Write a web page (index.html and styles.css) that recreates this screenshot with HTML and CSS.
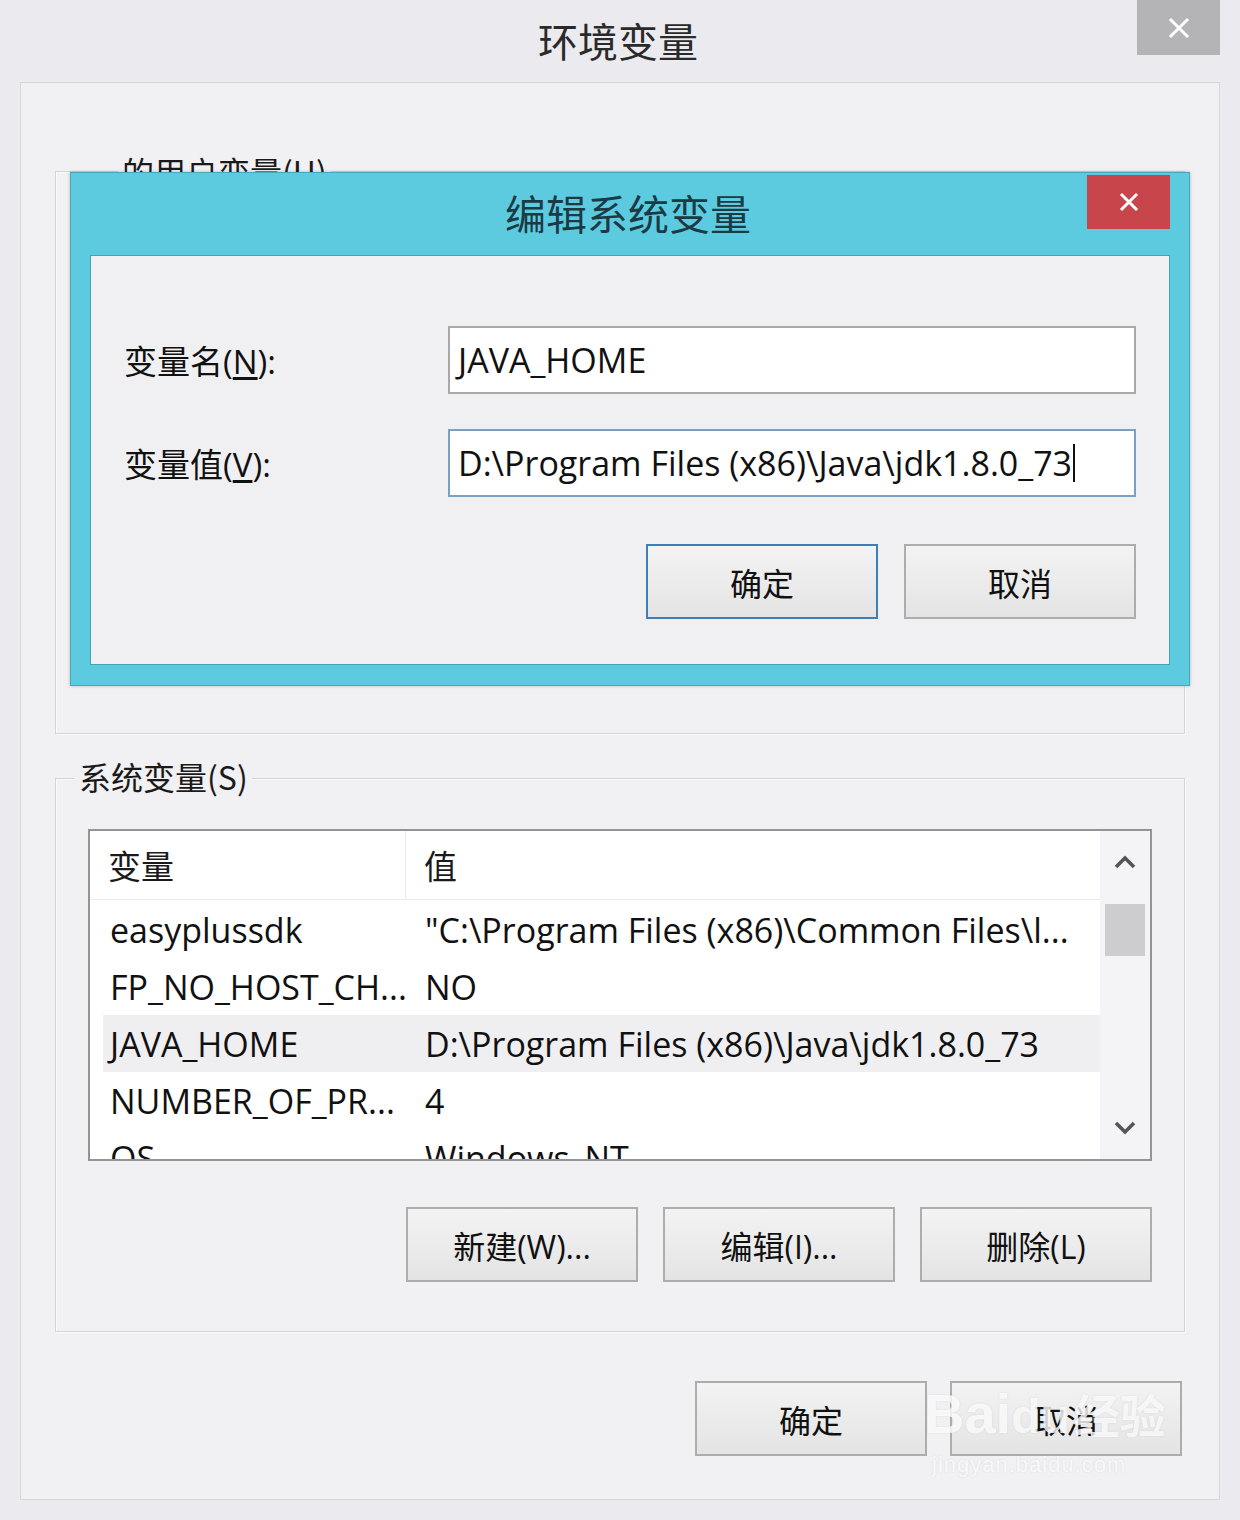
FILE: index.html
```html
<!DOCTYPE html>
<html lang="zh-CN">
<head>
<meta charset="utf-8">
<title>环境变量</title>
<link rel="stylesheet" href="styles.css">
</head>
<body>
<div class="window">
  <header class="titlebar">
    <span class="spacer"></span>
    <h1 class="title">环境变量</h1>
    <button class="close close-gray" aria-label="关闭">
      <svg width="22" height="22" viewBox="0 0 22 22"><path d="M3 3 L19 19 M19 3 L3 19" stroke="#fff" stroke-width="3" stroke-linecap="square"/></svg>
    </button>
  </header>

  <main class="client">
    <div class="group group-user">
      <span class="group-label label-user">的用户变量(U)</span>
    </div>

    <div class="group group-system">
      <span class="group-label label-system">系统变量(S)</span>
      <div class="listview">
        <div class="lv-main">
          <div class="lv-head">
            <div class="hc hc1">变量</div>
            <div class="hc hc2">值</div>
          </div>
          <div class="lv-body">
            <div class="row"><span class="c1">easyplussdk</span><span class="c2">"C:\Program Files (x86)\Common Files\l...</span></div>
            <div class="row"><span class="c1">FP_NO_HOST_CH...</span><span class="c2">NO</span></div>
            <div class="row selected"><span class="c1">JAVA_HOME</span><span class="c2">D:\Program Files (x86)\Java\jdk1.8.0_73</span></div>
            <div class="row"><span class="c1">NUMBER_OF_PR...</span><span class="c2">4</span></div>
            <div class="row"><span class="c1">OS</span><span class="c2">Windows_NT</span></div>
          </div>
        </div>
        <div class="scrollbar">
          <div class="sb-arrow">
            <svg width="24" height="14" viewBox="0 0 24 14"><path d="M3 12 L12 3 L21 12" fill="none" stroke="#555" stroke-width="3.6"/></svg>
          </div>
          <div class="sb-track"><div class="sb-thumb"></div></div>
          <div class="sb-arrow">
            <svg width="24" height="14" viewBox="0 0 24 14"><path d="M3 2 L12 11 L21 2" fill="none" stroke="#555" stroke-width="3.6"/></svg>
          </div>
        </div>
      </div>
      <div class="btn-row">
        <button class="btn">新建(W)...</button>
        <button class="btn">编辑(I)...</button>
        <button class="btn">删除(L)</button>
      </div>
    </div>

    <div class="btn-row footer">
      <button class="btn">确定</button>
      <button class="btn">取消</button>
    </div>
  </main>

  <section class="dialog">
    <header class="dlg-titlebar">
      <h2 class="dlg-title">编辑系统变量</h2>
      <button class="close close-red" aria-label="关闭">
        <svg width="20" height="20" viewBox="0 0 20 20"><path d="M3 3 L17 17 M17 3 L3 17" stroke="#fff" stroke-width="3" stroke-linecap="square"/></svg>
      </button>
    </header>
    <div class="dlg-body">
      <div class="form">
        <label class="lbl">变量名(<u>N</u>):</label>
        <div class="input">JAVA_HOME</div>
        <label class="lbl">变量值(<u>V</u>):</label>
        <div class="input focused">D:\Program Files (x86)\Java\jdk1.8.0_73<span class="caret"></span></div>
      </div>
      <div class="btn-row dlg-buttons">
        <button class="btn default">确定</button>
        <button class="btn">取消</button>
      </div>
    </div>
  </section>

  <div class="watermark">
    <div class="wm-logo"><span>Bai</span><span class="wm-du">du</span><span class="wm-cn">经验</span></div>
    <div class="wm-url">jingyan.baidu.com</div>
  </div>
</div>
</body>
</html>
```

FILE: styles.css
```css
* { box-sizing: border-box; }

body {
  margin: 0;
  background: #ebeaee;
  font-family: "Open Sans", "Noto Sans CJK SC", sans-serif;
  color: #111;
}

.window {
  position: relative;
  width: 1240px;
  height: 1520px;
  background: #ebeaee;
  overflow: hidden;
}

/* ---------- main window title bar ---------- */
.titlebar {
  height: 82px;
  display: grid;
  grid-template-columns: 1fr auto 1fr;
}

.title {
  margin: 0;
  align-self: center;
  font-family: "Noto Sans CJK SC", sans-serif;
  font-weight: 400;
  font-size: 40px;
  line-height: 1;
  color: #2a2a2a;
  padding: 0 4px 2px 0;
}

.close {
  border: 0;
  padding: 0;
  display: flex;
  align-items: center;
  justify-content: center;
}

.close-gray {
  justify-self: end;
  align-self: start;
  margin-right: 20px;
  width: 83px;
  height: 55px;
  background: #b4b4b6;
}

/* ---------- client area ---------- */
.client {
  margin: 0 20px;
  height: 1418px;
  border: 1px solid #d7d7da;
  background: #f1f0f3;
  padding: 0 34px;
  display: flex;
  flex-direction: column;
}

.group {
  border: 1px solid #d4d4d7;
  box-shadow: inset 1px 1px 0 #fbfbfc, 1px 1px 0 #fbfbfc;
}

.group-label {
  display: block;
  width: max-content;
  margin: -21px 0 0 19px;
  padding: 0 4px;
  background: #f1f0f3;
  font-family: "Noto Sans CJK SC", sans-serif;
  font-size: 32px;
  line-height: 40px;
  color: #1a1a1a;
}

.group-user {
  margin-top: 88px;
  height: 563px;
}

.label-user { margin-left: 62px; }

.group-system {
  margin-top: 44px;
  padding: 0 32px 49px;
}

.label-system { margin-left: -13px; margin-top: -23px; }

/* ---------- list view ---------- */
.listview {
  margin-top: 33px;
  height: 332px;
  border: 2px solid #949496;
  background: #fff;
  display: flex;
}

.lv-main {
  flex: 1;
  display: flex;
  flex-direction: column;
  overflow: hidden;
}

.lv-head {
  height: 69px;
  flex: none;
  display: grid;
  grid-template-columns: 316px 1fr;
  border-bottom: 1px solid #ececee;
}

.hc {
  display: flex;
  align-items: center;
  font-family: "Noto Sans CJK SC", sans-serif;
  font-size: 33px;
  color: #1a1a1a;
}

.hc1 { padding-left: 18px; border-right: 1px solid #ececee; }
.hc2 { padding-left: 18px; }

.lv-body {
  flex: 1;
  overflow: hidden;
  padding: 1px 0 0 13px;
}

.row {
  height: 57px;
  display: grid;
  grid-template-columns: 303px 1fr;
  align-items: center;
  font-size: 34px;
  white-space: nowrap;
  color: #111;
}

.row.selected { background: #efeff2; }

.c1 { padding-left: 7px; overflow: hidden; }
.c2 { padding-left: 19px; overflow: hidden; }

.scrollbar {
  width: 50px;
  flex: none;
  background: #f4f4f6;
  display: flex;
  flex-direction: column;
}

.sb-arrow {
  height: 62px;
  display: flex;
  align-items: center;
  justify-content: center;
}

.sb-track {
  flex: 1;
  padding: 11px 5px 0;
}

.sb-thumb {
  height: 52px;
  background: #cdcdcf;
}

/* ---------- buttons ---------- */
.btn-row {
  display: flex;
  justify-content: flex-end;
  gap: 25px;
  margin-top: 46px;
}

.btn {
  width: 232px;
  height: 75px;
  border: 2px solid #adadad;
  background: linear-gradient(#f3f3f3, #e4e4e4);
  font-family: "Open Sans", "Noto Sans CJK SC", sans-serif;
  font-size: 32px;
  color: #111;
  padding: 0;
}

.btn.default { border-color: #3f7fb8; }

.footer {
  margin-top: 49px;
  margin-right: 3px;
  gap: 23px;
}

/* ---------- edit dialog ---------- */
.dialog {
  position: absolute;
  left: 70px;
  top: 172px;
  width: 1120px;
  height: 514px;
  background: #5ccbe0;
  border: 1px solid #48a9bd;
  box-shadow: 0 0 3px rgba(0, 0, 0, 0.25);
  display: flex;
  flex-direction: column;
}

.dlg-titlebar {
  height: 82px;
  flex: none;
  display: flex;
  justify-content: center;
  align-items: center;
  position: relative;
}

.dlg-title {
  margin: 0;
  font-family: "Noto Sans CJK SC", sans-serif;
  font-weight: 400;
  font-size: 41px;
  line-height: 1;
  color: #1b3a44;
  padding: 0 4px 4px 0;
}

.close-red {
  position: absolute;
  top: 2px;
  right: 19px;
  width: 83px;
  height: 54px;
  background: #c8454b;
}

.dlg-body {
  margin: 0 19px;
  height: 410px;
  background: #f0f0f2;
  border: 1px solid #46a2b6;
  padding: 70px 33px 0;
}

.form {
  display: grid;
  grid-template-columns: 324px 688px;
  row-gap: 35px;
  align-items: center;
}

.lbl {
  font-family: "Open Sans", "Noto Sans CJK SC", sans-serif;
  font-size: 33px;
  color: #111;
}

.lbl u { text-underline-offset: 3px; }

.input {
  height: 68px;
  border: 2px solid #a9a9ab;
  background: #fff;
  padding: 0 8px;
  display: flex;
  align-items: center;
  font-size: 34px;
  white-space: nowrap;
  color: #111;
}

.input.focused { border-color: #7d9fc2; }

.caret {
  display: inline-block;
  width: 2px;
  height: 38px;
  background: #111;
  margin-left: 1px;
}

.dlg-buttons {
  margin-top: 47px;
  gap: 26px;
}

/* ---------- watermark ---------- */
.watermark {
  position: absolute;
  left: 924px;
  top: 1378px;
  color: rgba(255, 255, 255, 0.8);
  text-shadow: 0 0 2px rgba(120, 120, 120, 0.2);
  pointer-events: none;
}

.wm-logo {
  display: flex;
  align-items: baseline;
  font-family: "Liberation Sans", sans-serif;
  font-weight: 700;
  font-size: 56px;
  line-height: 70px;
}

.wm-du { font-size: 48px; }

.wm-cn {
  font-family: "Noto Sans CJK SC", sans-serif;
  font-size: 46px;
  margin-left: 4px;
}

.wm-url {
  font-family: "Liberation Sans", sans-serif;
  font-size: 22px;
  padding-left: 8px;
  letter-spacing: 1px;
}
```
